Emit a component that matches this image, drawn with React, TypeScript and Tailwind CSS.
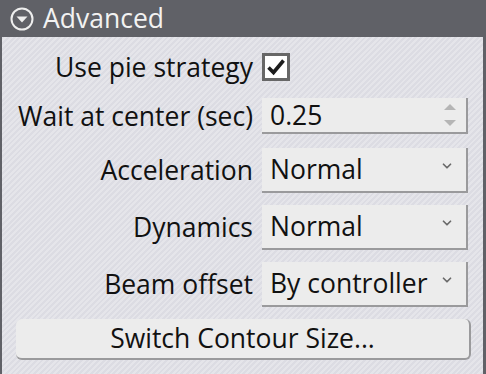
import { ChevronDown } from "lucide-react";

const stripes =
  "bg-[repeating-linear-gradient(135deg,#dcdce3_0px,#dcdce3_2px,#e5e5ea_2px,#e5e5ea_4px)]";

function Select({ value }: { value: string }) {
  return (
    <div className="flex h-[45px] w-[206px] items-center justify-between border-r-2 border-b-2 border-[#9a9a9c] bg-[#ececec] pl-2 pr-3">
      <span>{value}</span>
      <ChevronDown aria-hidden="true" size={14} strokeWidth={3} className="mb-2 text-[#6a6a6a]" />
    </div>
  );
}

function Label({ children }: { children: string }) {
  return <div className="text-right">{children}</div>;
}

export default function App() {
  return (
    <div className="h-[374px] w-[486px] bg-[#606167] font-['Open_Sans',sans-serif] text-[26.5px] text-[#111]">
      <div className="flex h-[37px] items-center gap-[9px] pl-[10px] text-[#f2f2f2]">
        <svg width="24" height="24" viewBox="0 0 24 24" aria-hidden="true">
          <circle cx="12" cy="12" r="10.5" fill="none" stroke="#eeeeee" strokeWidth="2" />
          <path d="M6.5 9.5h11L12 15.5z" fill="#eeeeee" />
        </svg>
        <span className="leading-none">Advanced</span>
      </div>
      <div className={`ml-[2px] mr-[3px] h-[337px] ${stripes} pt-[16px]`}>
        <div className="grid grid-cols-[251px_206px] items-center gap-x-[9px] leading-none">
          <Label>Use pie strategy</Label>
          <div className="flex h-[28px] w-[28px] items-center justify-center border-[3px] border-[#676767] bg-white">
            <svg width="20" height="18" viewBox="0 0 20 18" aria-hidden="true">
              <path d="M2.5 9.5l5 5L17.5 2.5" fill="none" stroke="#1c1c1c" strokeWidth="3.6" />
            </svg>
          </div>

          <div className="col-span-2 h-[17px]" />
          <Label>Wait at center (sec)</Label>
          <div className="flex h-[36px] w-[206px] items-center justify-between border-r-2 border-b-2 border-[#9a9a9c] bg-[#ececec] pl-2 pr-[10px]">
            <span>0.25</span>
            <div className="flex flex-col gap-[10px]">
              <svg width="12" height="6" viewBox="0 0 12 6" aria-hidden="true">
                <path d="M0 6L6 0l6 6z" fill="#b5b5b5" />
              </svg>
              <svg width="12" height="6" viewBox="0 0 12 6" aria-hidden="true">
                <path d="M0 0h12L6 6z" fill="#b5b5b5" />
              </svg>
            </div>
          </div>

          <div className="col-span-2 h-[14px]" />
          <Label>Acceleration</Label>
          <Select value="Normal" />

          <div className="col-span-2 h-[12px]" />
          <Label>Dynamics</Label>
          <Select value="Normal" />

          <div className="col-span-2 h-[12px]" />
          <Label>Beam offset</Label>
          <Select value="By controller" />
        </div>
        <div className="mt-[12px] ml-[14px] flex h-[41px] w-[455px] items-center justify-center rounded-[6px] border-r-2 border-b-2 border-[#9a9a9c] bg-[#ececec] leading-none">
          Switch Contour Size...
        </div>
      </div>
    </div>
  );
}
